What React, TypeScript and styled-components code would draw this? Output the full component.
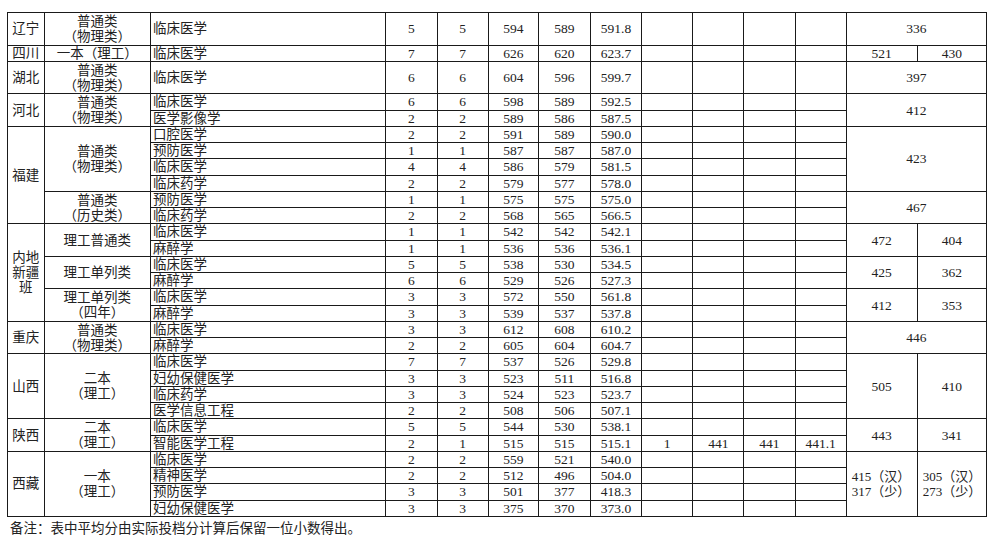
import React from 'react';
import styled, { createGlobalStyle } from 'styled-components';

const Global = createGlobalStyle`
  html, body { margin: 0; padding: 0; background: #fff; }
  body {
    font-family: "Liberation Serif", "Noto Sans CJK SC", serif;
    color: #222;
  }
`;

const Page = styled.div`
  width: 1000px;
  height: 541px;
  box-sizing: border-box;
  padding: 12px 0 0 7px;
  overflow: hidden;
`;

const Table = styled.table`
  border-collapse: collapse;
  table-layout: fixed;
  width: 979px;
  font-size: 13.5px;
  line-height: 15px;
`;

const Row = styled.tr<{ $u: number }>`
  height: ${(p) => p.$u * 16.25}px;
`;

const Cell = styled.td`
  border: 1px solid #1a1a1a;
  padding: 0;
  text-align: center;
  vertical-align: middle;
  white-space: nowrap;
  overflow: hidden;
`;

const Prov = styled(Cell)``;
const Type = styled(Cell)``;
const Major = styled(Cell)`
  text-align: left;
  padding-left: 2px;
`;
const Num = styled(Cell)``;
const Line = styled(Cell)`
  font-size: 13px;
  text-align: left;
  padding-left: 5px;
`;

const Note = styled.div`
  margin-top: 4px;
  padding-left: 3px;
  font-size: 13.5px;
  line-height: 16px;
`;

const widths = [36.5, 106.5, 235, 51.7, 51, 50.3, 52, 51, 51.3, 51, 51.4, 51, 71, 69.3];

const nums = (v: string[]) => v.map((n, i) => <Num key={'n' + i}>{n}</Num>);
const blanks = (v: string[] = ['', '', '', '']) => v.map((n, i) => <Num key={'b' + i}>{n}</Num>);

export default function App() {
  return (
    <Page>
      <Global />
      <Table>
        <colgroup>
          {widths.map((w, i) => (
            <col key={i} style={{ width: w }} />
          ))}
        </colgroup>
        <tbody>
          <Row $u={2}>
            <Prov>辽宁</Prov>
            <Type>普通类<br />（物理类）</Type>
            <Major>临床医学</Major>
            {nums(['5', '5', '594', '589', '591.8'])}
            {blanks()}
            <Num colSpan={2}>336</Num>
          </Row>
          <Row $u={1}>
            <Prov>四川</Prov>
            <Type>一本（理工）</Type>
            <Major>临床医学</Major>
            {nums(['7', '7', '626', '620', '623.7'])}
            {blanks()}
            <Num>521</Num>
            <Num>430</Num>
          </Row>
          <Row $u={2}>
            <Prov>湖北</Prov>
            <Type>普通类<br />（物理类）</Type>
            <Major>临床医学</Major>
            {nums(['6', '6', '604', '596', '599.7'])}
            {blanks()}
            <Num colSpan={2}>397</Num>
          </Row>
          <Row $u={1}>
            <Prov rowSpan={2}>河北</Prov>
            <Type rowSpan={2}>普通类<br />（物理类）</Type>
            <Major>临床医学</Major>
            {nums(['6', '6', '598', '589', '592.5'])}
            {blanks()}
            <Num colSpan={2} rowSpan={2}>412</Num>
          </Row>
          <Row $u={1}>
            <Major>医学影像学</Major>
            {nums(['2', '2', '589', '586', '587.5'])}
            {blanks()}
          </Row>
          <Row $u={1}>
            <Prov rowSpan={6}>福建</Prov>
            <Type rowSpan={4}>普通类<br />（物理类）</Type>
            <Major>口腔医学</Major>
            {nums(['2', '2', '591', '589', '590.0'])}
            {blanks()}
            <Num colSpan={2} rowSpan={4}>423</Num>
          </Row>
          <Row $u={1}>
            <Major>预防医学</Major>
            {nums(['1', '1', '587', '587', '587.0'])}
            {blanks()}
          </Row>
          <Row $u={1}>
            <Major>临床医学</Major>
            {nums(['4', '4', '586', '579', '581.5'])}
            {blanks()}
          </Row>
          <Row $u={1}>
            <Major>临床药学</Major>
            {nums(['2', '2', '579', '577', '578.0'])}
            {blanks()}
          </Row>
          <Row $u={1}>
            <Type rowSpan={2}>普通类<br />（历史类）</Type>
            <Major>预防医学</Major>
            {nums(['1', '1', '575', '575', '575.0'])}
            {blanks()}
            <Num colSpan={2} rowSpan={2}>467</Num>
          </Row>
          <Row $u={1}>
            <Major>临床药学</Major>
            {nums(['2', '2', '568', '565', '566.5'])}
            {blanks()}
          </Row>
          <Row $u={1}>
            <Prov rowSpan={6}>内地<br />新疆<br />班</Prov>
            <Type rowSpan={2}>理工普通类</Type>
            <Major>临床医学</Major>
            {nums(['1', '1', '542', '542', '542.1'])}
            {blanks()}
            <Num rowSpan={2}>472</Num>
            <Num rowSpan={2}>404</Num>
          </Row>
          <Row $u={1}>
            <Major>麻醉学</Major>
            {nums(['1', '1', '536', '536', '536.1'])}
            {blanks()}
          </Row>
          <Row $u={1}>
            <Type rowSpan={2}>理工单列类</Type>
            <Major>临床医学</Major>
            {nums(['5', '5', '538', '530', '534.5'])}
            {blanks()}
            <Num rowSpan={2}>425</Num>
            <Num rowSpan={2}>362</Num>
          </Row>
          <Row $u={1}>
            <Major>麻醉学</Major>
            {nums(['6', '6', '529', '526', '527.3'])}
            {blanks()}
          </Row>
          <Row $u={1}>
            <Type rowSpan={2}>理工单列类<br />（四年）</Type>
            <Major>临床医学</Major>
            {nums(['3', '3', '572', '550', '561.8'])}
            {blanks()}
            <Num rowSpan={2}>412</Num>
            <Num rowSpan={2}>353</Num>
          </Row>
          <Row $u={1}>
            <Major>麻醉学</Major>
            {nums(['3', '3', '539', '537', '537.8'])}
            {blanks()}
          </Row>
          <Row $u={1}>
            <Prov rowSpan={2}>重庆</Prov>
            <Type rowSpan={2}>普通类<br />（物理类）</Type>
            <Major>临床医学</Major>
            {nums(['3', '3', '612', '608', '610.2'])}
            {blanks()}
            <Num colSpan={2} rowSpan={2}>446</Num>
          </Row>
          <Row $u={1}>
            <Major>麻醉学</Major>
            {nums(['2', '2', '605', '604', '604.7'])}
            {blanks()}
          </Row>
          <Row $u={1}>
            <Prov rowSpan={4}>山西</Prov>
            <Type rowSpan={4}>二本<br />（理工）</Type>
            <Major>临床医学</Major>
            {nums(['7', '7', '537', '526', '529.8'])}
            {blanks()}
            <Num rowSpan={4}>505</Num>
            <Num rowSpan={4}>410</Num>
          </Row>
          <Row $u={1}>
            <Major>妇幼保健医学</Major>
            {nums(['3', '3', '523', '511', '516.8'])}
            {blanks()}
          </Row>
          <Row $u={1}>
            <Major>临床药学</Major>
            {nums(['3', '3', '524', '523', '523.7'])}
            {blanks()}
          </Row>
          <Row $u={1}>
            <Major>医学信息工程</Major>
            {nums(['2', '2', '508', '506', '507.1'])}
            {blanks()}
          </Row>
          <Row $u={1}>
            <Prov rowSpan={2}>陕西</Prov>
            <Type rowSpan={2}>二本<br />（理工）</Type>
            <Major>临床医学</Major>
            {nums(['5', '5', '544', '530', '538.1'])}
            {blanks()}
            <Num rowSpan={2}>443</Num>
            <Num rowSpan={2}>341</Num>
          </Row>
          <Row $u={1}>
            <Major>智能医学工程</Major>
            {nums(['2', '1', '515', '515', '515.1'])}
            {blanks(['1', '441', '441', '441.1'])}
          </Row>
          <Row $u={1}>
            <Prov rowSpan={4}>西藏</Prov>
            <Type rowSpan={4}>一本<br />（理工）</Type>
            <Major>临床医学</Major>
            {nums(['2', '2', '559', '521', '540.0'])}
            {blanks()}
            <Line rowSpan={4}>415（汉）<br />317（少）</Line>
            <Line rowSpan={4}>305（汉）<br />273（少）</Line>
          </Row>
          <Row $u={1}>
            <Major>精神医学</Major>
            {nums(['2', '2', '512', '496', '504.0'])}
            {blanks()}
          </Row>
          <Row $u={1}>
            <Major>预防医学</Major>
            {nums(['3', '3', '501', '377', '418.3'])}
            {blanks()}
          </Row>
          <Row $u={1}>
            <Major>妇幼保健医学</Major>
            {nums(['3', '3', '375', '370', '373.0'])}
            {blanks()}
          </Row>
        </tbody>
      </Table>
      <Note>备注：表中平均分由实际投档分计算后保留一位小数得出。</Note>
    </Page>
  );
}
